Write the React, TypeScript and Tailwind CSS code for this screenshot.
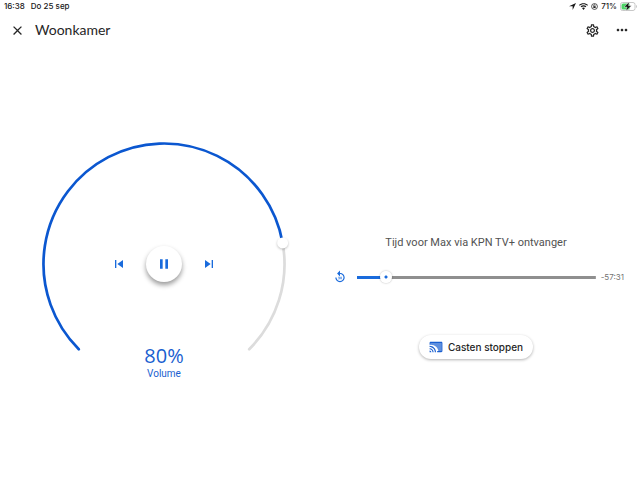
import { useState } from "react";
import {
  MdClose,
  MdMoreHoriz,
  MdOutlineSettings,
  MdPause,
  MdReplay30,
  MdSkipNext,
  MdSkipPrevious,
} from "react-icons/md";

const RADIUS = 120.5;
const CENTER = 128;
const START_ANGLE = 135;
const SWEEP = 270;

const pointAt = (percent: number) => {
  const angle = ((START_ANGLE + (SWEEP * percent) / 100) * Math.PI) / 180;
  return {
    x: CENTER + RADIUS * Math.cos(angle),
    y: CENTER + RADIUS * Math.sin(angle),
  };
};

const arc = (from: number, to: number) => {
  const a = pointAt(from);
  const b = pointAt(to);
  const large = ((to - from) / 100) * SWEEP > 180 ? 1 : 0;
  return `M ${a.x} ${a.y} A ${RADIUS} ${RADIUS} 0 ${large} 1 ${b.x} ${b.y}`;
};

const StatusBar = () => (
  <div className="flex items-center justify-between h-3 pl-1 pr-[3px] text-[8px] leading-3 font-medium text-neutral-900 font-['Inter',sans-serif]">
    <div className="flex gap-[6px]">
      <span>16:38</span>
      <span>Do 25 sep</span>
    </div>
    <div className="flex items-center gap-[3px]">
      <svg viewBox="0 0 24 24" className="w-[7px] h-[7px]" fill="currentColor">
        <path d="M24 0 0 11.500h12.500V24z" />
      </svg>
      <svg viewBox="0 0 24 18" className="w-[9px] h-[7px]" fill="currentColor">
        <path d="M12 0C7.300 0 3.100 1.800 0 4.800l2.300 2.300C4.800 4.700 8.200 3.200 12 3.200s7.200 1.500 9.700 3.900L24 4.800C20.900 1.800 16.700 0 12 0z" />
        <path d="M12 5.500c-3 0-5.700 1.200-7.700 3.100l2.600 2.700c1.300-1.400 3.100-2.200 5.100-2.200s3.800.8 5.100 2.200l2.600-2.700C17.700 6.700 15 5.500 12 5.500z" />
        <path d="M12 11.500c-1.600 0-2.900.6-3.900 1.600L12 18l3.900-4.900c-1-1-2.300-1.600-3.900-1.600z" />
      </svg>
      <svg viewBox="0 0 24 24" className="w-[7px] h-[7px]" fill="none" stroke="currentColor" strokeWidth="2.500">
        <circle cx="12" cy="12" r="10" />
        <rect x="8" y="11" width="8" height="6" fill="currentColor" stroke="none" />
        <path d="M9.500 11V8.500a2.500 2.500 0 0 1 5 0" />
      </svg>
      <span>71%</span>
      <svg viewBox="0 0 34 18" className="w-[17px] h-[9px]">
        <rect x="1" y="1" width="29" height="16" rx="4" fill="#fff" stroke="#b5b5b5" strokeWidth="1.500" />
        <path d="M6 3h13v12H6a3 3 0 0 1-3-3V6a3 3 0 0 1 3-3z" fill="#4cd466" />
        <path d="M32 6c2 .8 2 5.200 0 6z" fill="#b5b5b5" />
        <path d="M18.500 0 8 10h6l-2 8L23 7.500h-6z" fill="#111" stroke="#fff" strokeWidth=".8" />
      </svg>
    </div>
  </div>
);

const CastIcon = () => (
  <svg viewBox="0 0 24 24" className="size-[14px] text-[#1a5fd0]" fill="currentColor">
    <path d="M3 5v3c7.200 0 13 5.800 13 11h5V5z" opacity=".7" />
    <path d="M21 3H3c-1.100 0-2 .9-2 2v3h2V5h18v14h-7v2h7c1.100 0 2-.9 2-2V5c0-1.100-.9-2-2-2z" />
    <path d="M1 18v3h3c0-1.660-1.340-3-3-3zm0-4v2c2.760 0 5 2.240 5 5h2c0-3.870-3.130-7-7-7zm0-4v2c4.970 0 9 4.030 9 9h2c0-6.080-4.930-11-11-11z" />
  </svg>
);

const VolumeDial = () => {
  const [volume, setVolume] = useState(79.6);
  const handle = pointAt(volume);

  return (
    <div className="grid justify-items-center">
      <svg viewBox="0 0 256 256" className="w-64 h-64 [grid-area:1/1]" fill="none" strokeLinecap="round">
        <path d={arc(volume, 100)} stroke="#dcdcdc" strokeWidth="2.700" />
        <path d={arc(0, volume)} stroke="#0b57d0" strokeWidth="2.700" />
        <circle cx={handle.x} cy={handle.y} r="5.500" fill="#fff" className="drop-shadow-[0_1px_1px_rgba(0,0,0,0.25)]" />
      </svg>

      {/* Playback */}
      <div className="flex items-center self-center gap-[15px] text-[#1a6bdc] [grid-area:1/1]">
        <button type="button" aria-label="Vorige" className="p-1">
          <MdSkipPrevious className="size-4" />
        </button>
        <button
          type="button"
          aria-label="Pauzeren"
          className="flex items-center justify-center bg-white rounded-full size-9 shadow-[0_3px_5px_rgba(0,0,0,0.4)]">
          <MdPause className="size-4" />
        </button>
        <button type="button" aria-label="Volgende" className="p-1">
          <MdSkipNext className="size-4" />
        </button>
      </div>

      <div className="flex flex-col items-center self-end pb-[10px] text-[#1a5fd0] [grid-area:1/1]">
        <output htmlFor="volume" className="text-[20px] leading-5 font-['Open_Sans',sans-serif]">
          {Math.round(volume)}%
        </output>
        <label htmlFor="volume" className="text-[10px] leading-4 font-['Roboto',sans-serif]">
          Volume
        </label>
        <input
          id="volume"
          type="range"
          step="any"
          className="sr-only"
          value={volume}
          onChange={(e) => setVolume(Number(e.target.value))}
        />
      </div>
    </div>
  );
};

const NowPlaying = () => {
  const [position, setPosition] = useState(10);

  return (
    <section className="flex flex-col items-center pt-16 pl-3 pr-4">
      <h2 className="pr-1 text-[11px] leading-5 text-neutral-600 font-['Roboto',sans-serif]">
        Tijd voor Max via KPN TV+ ontvanger
      </h2>
      <div className="flex items-center w-full mt-4">
        <button type="button" aria-label="30 seconden terug" className="p-px text-[#1a6bdc]">
          <MdReplay30 className="size-[14px]" />
        </button>
        <input
          type="range"
          aria-label="Positie"
          value={position}
          onChange={(e) => setPosition(Number(e.target.value))}
          className="flex-1 min-w-0 h-3 ml-[9px] mr-[5px] appearance-none bg-no-repeat bg-center [background-size:100%_3px] [&::-webkit-slider-thumb]:appearance-none [&::-webkit-slider-thumb]:size-3 [&::-webkit-slider-thumb]:rounded-full [&::-webkit-slider-thumb]:bg-[radial-gradient(circle,#1a6bdc_1px,#fff_2px)] [&::-webkit-slider-thumb]:shadow-[0_0_2px_rgba(0,0,0,0.35)]"
          style={{
            backgroundImage: `linear-gradient(to right, #1a6bdc ${position}%, #8f8f8f ${position}%)`,
          }}
        />
        <span className="text-[8px] leading-3 text-neutral-500 font-['Inter',sans-serif]">-57:31</span>
      </div>
      <button
        type="button"
        className="flex items-center h-6 gap-[5px] px-[10px] mr-1 mt-[50px] text-[10px] font-medium bg-white rounded-full text-neutral-800 shadow-[0_1px_3px_rgba(0,0,0,0.3)] font-['Inter',sans-serif]">
        <CastIcon />
        Casten stoppen
      </button>
    </section>
  );
};

const App = () => (
  <div className="flex flex-col min-h-screen bg-white">
    <StatusBar />
    <header className="flex items-center h-9 pl-[10px] pr-[10px] text-neutral-800">
      <button type="button" aria-label="Sluiten">
        <MdClose className="size-[15px]" />
      </button>
      <h1 className="flex-1 ml-[10px] text-[14px] leading-5 font-['Lato',sans-serif]">Woonkamer</h1>
      <button type="button" aria-label="Instellingen">
        <MdOutlineSettings className="size-[15px]" />
      </button>
      <button type="button" aria-label="Meer" className="ml-[14px]">
        <MdMoreHoriz className="size-4" />
      </button>
    </header>
    <main className="grid items-center flex-1 grid-cols-2">
      <section className="flex justify-center pl-2">
        <VolumeDial />
      </section>
      <NowPlaying />
    </main>
  </div>
);

export default App;
